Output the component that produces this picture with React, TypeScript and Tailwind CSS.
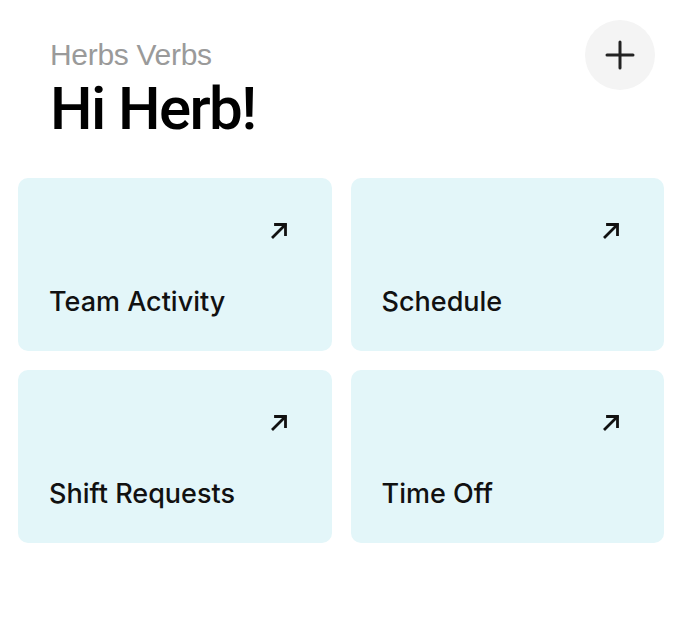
import React from 'react';

const cards = ['Team Activity', 'Schedule', 'Shift Requests', 'Time Off'];

const ArrowIcon: React.FC = () => (
    <svg width="19" height="19" viewBox="0 0 19 19" fill="none" stroke="#111" strokeWidth="2.8" strokeLinecap="square">
        <path d="M3 16 L15 4" />
        <path d="M5.5 3.5 H15.5 V13.5" />
    </svg>
);

const Card: React.FC<{ title: string }> = ({ title }) => (
    <div className="h-[173px] rounded-[10px] bg-[#e3f6f9] flex flex-col justify-between pl-8 pr-[43px] pt-[43px] pb-[29px]">
        <div className="flex justify-end">
            <ArrowIcon />
        </div>
        <div className="text-[27px] font-medium text-[#111] font-['Inter',sans-serif] -ml-px">{title}</div>
    </div>
);

export default function App() {
    return (
        <div className="w-[682px] h-[618px] bg-white font-['Liberation_Sans',sans-serif]">
            <div className="flex justify-between pl-[50px] pr-[27px] pt-5">
                <div className="pt-[18px]">
                    <div className="text-[30px] leading-[34px] text-[#9a9a9a] tracking-[-0.3px]">Herbs Verbs</div>
                    <div className="mt-1 text-[60px] leading-[66px] font-medium text-black tracking-[-1.6px] font-['Roboto',sans-serif]">Hi Herb!</div>
                </div>
                <button className="w-[70px] h-[70px] rounded-full bg-[#f4f4f4] flex items-center justify-center">
                    <svg width="32" height="32" viewBox="0 0 32 32" stroke="#222" strokeWidth="3" strokeLinecap="round">
                        <path d="M16 3 V29" />
                        <path d="M3 16 H29" />
                    </svg>
                </button>
            </div>
            <div className="grid grid-cols-2 gap-[19px] px-[18px] mt-[36px]">
                {cards.map((c) => (
                    <Card key={c} title={c} />
                ))}
            </div>
        </div>
    );
}
